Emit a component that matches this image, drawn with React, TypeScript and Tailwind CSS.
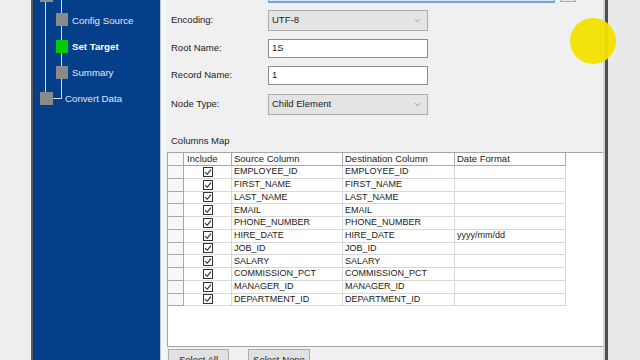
import React from 'react';
import { ChevronDown } from 'lucide-react';

interface RowData {
  source: string;
  dest: string;
  format?: string;
}

const rows: Array<RowData> = [
  { source: 'EMPLOYEE_ID', dest: 'EMPLOYEE_ID' },
  { source: 'FIRST_NAME', dest: 'FIRST_NAME' },
  { source: 'LAST_NAME', dest: 'LAST_NAME' },
  { source: 'EMAIL', dest: 'EMAIL' },
  { source: 'PHONE_NUMBER', dest: 'PHONE_NUMBER' },
  { source: 'HIRE_DATE', dest: 'HIRE_DATE', format: 'yyyy/mm/dd' },
  { source: 'JOB_ID', dest: 'JOB_ID' },
  { source: 'SALARY', dest: 'SALARY' },
  { source: 'COMMISSION_PCT', dest: 'COMMISSION_PCT' },
  { source: 'MANAGER_ID', dest: 'MANAGER_ID' },
  { source: 'DEPARTMENT_ID', dest: 'DEPARTMENT_ID' },
];

const CheckBox: React.FC = () => (
  <svg width="10" height="10" viewBox="0 0 10 10">
    <rect x="0.5" y="0.5" width="9" height="9" fill="#fff" stroke="#333" strokeWidth="1" />
    <path d="M2 5.2 L4.2 7.3 L8 2.6" fill="none" stroke="#222" strokeWidth="1.1" />
  </svg>
);

const Sidebar: React.FC = () => (
  <div className="relative w-[127px] h-full shrink-0 bg-[#053f89]">
    <svg className="absolute left-0 top-0" width="127" height="360" viewBox="0 0 127 360">
      <line x1="12.5" y1="0" x2="12.5" y2="92" stroke="#d5dcea" strokeWidth="1" />
      <line x1="28.5" y1="0" x2="28.5" y2="98.5" stroke="#d5dcea" strokeWidth="1" />
      <line x1="20" y1="98.5" x2="29" y2="98.5" stroke="#d5dcea" strokeWidth="1" />
      <rect x="7" y="-10" width="13" height="12" fill="#8c8c8c" />
      <rect x="23" y="13" width="12" height="13" fill="#8a8a8a" />
      <rect x="23" y="40" width="12" height="13" fill="#00cc00" />
      <rect x="23" y="66" width="12" height="13" fill="#8a8a8a" />
      <rect x="7" y="92" width="13" height="13" fill="#8a8a8a" />
    </svg>
    <div className="relative flex flex-col pt-[7px] pl-[39px] text-[9.7px] leading-[13px] text-[#e2e8f2]">
      <div className="h-[26px] flex items-center">Config Source</div>
      <div className="h-[26px] flex items-center font-bold text-white">Set Target</div>
      <div className="h-[26px] flex items-center">Summary</div>
      <div className="h-[26px] flex items-center -ml-[7px]">Convert Data</div>
    </div>
  </div>
);

const Field: React.FC<{ label: string; value: string; select?: boolean; className: string }> = (props) => {
  const { label, value, select, className } = props;
  return (
    <div className={`flex items-center shrink-0 ${className}`}>
      <div className="w-[97px] ml-[5px] text-[9.5px] text-[#1c1c1c]">{label}</div>
      {select ? (
        <div className="w-[160px] h-[21px] bg-[#e4e4e4] border border-[#adadad] flex items-center justify-between pl-[3px] pr-[5px] text-[9.5px] text-[#1a1a1a]">
          <span>{value}</span>
          <ChevronDown size={9} strokeWidth={1.5} color="#666" />
        </div>
      ) : (
        <div className="w-[160px] h-[19px] bg-white border border-[#8c8c8c] flex items-center pl-[3px] text-[9.5px] text-[#1a1a1a]">
          {value}
        </div>
      )}
    </div>
  );
};

const Grid: React.FC = () => (
  <div className="shrink-0 ml-[1px] mt-[5px] w-[437px] h-[195px] bg-white border border-[#a5a5a5] text-[9px] text-[#1a1a1a] leading-none">
    <div className="flex h-[13px]">
      <div className="w-[16px] border-r border-b border-[#a8a8a8] bg-[#f7f7f7]" />
      <div className="w-[48px] border-r border-b border-[#a8a8a8] flex items-center pl-[3px] text-[9.5px]">Include</div>
      <div className="w-[111px] border-r border-b border-[#a8a8a8] flex items-center pl-[2px] text-[9.5px]">Source Column</div>
      <div className="w-[112px] border-r border-b border-[#a8a8a8] flex items-center pl-[2px] text-[9.5px]">Destination Column</div>
      <div className="w-[111px] border-r border-b border-[#a8a8a8] flex items-center pl-[2px] text-[9.5px]">Date Format</div>
    </div>
    {rows.map((r) => (
      <div key={r.source} className="flex h-[12.75px]">
        <div className="w-[16px] border-r border-b border-[#a8a8a8] bg-[#f7f7f7]" />
        <div className="w-[48px] border-r border-b border-[#d8d8d8] flex items-center justify-center">
          <CheckBox />
        </div>
        <div className="w-[111px] border-r border-b border-[#d8d8d8] flex items-center pl-[2px]">{r.source}</div>
        <div className="w-[112px] border-r border-b border-[#d8d8d8] flex items-center pl-[2px]">{r.dest}</div>
        <div className="w-[111px] border-r border-b border-[#d8d8d8] flex items-center pl-[2px]">{r.format}</div>
      </div>
    ))}
  </div>
);

const Form: React.FC = () => (
  <div className="w-[437px] h-full shrink-0 flex flex-col bg-[#f0f0f0]">
    <div className="flex items-start h-[3px] shrink-0">
      <div className="ml-[102px] w-[287px] h-[3px] bg-[#dce9f7] border-b-2 border-x border-[#78a6da]" />
      <div className="ml-[5px] w-[16px] h-[2px] bg-[#e6e6e6] border-b border-x border-[#adadad]" />
    </div>
    <Field className="mt-[7px]" label="Encoding:" value="UTF-8" select />
    <Field className="mt-[8px]" label="Root Name:" value="1S" />
    <Field className="mt-[8px]" label="Record Name:" value="1" />
    <Field className="mt-[9px]" label="Node Type:" value="Child Element" select />
    <div className="shrink-0 mt-[19px] ml-[5px] h-[13px] leading-[13px] text-[9.5px] text-[#1c1c1c]">Columns Map</div>
    <Grid />
    <div className="shrink-0 flex mt-[2px] ml-[2px] gap-[19px] text-[9.5px] text-[#1a1a1a]">
      <div className="w-[61px] h-[20px] bg-[#e1e1e1] border border-[#adadad] flex justify-center pt-[3px]">Select All</div>
      <div className="w-[62px] h-[20px] bg-[#e1e1e1] border border-[#adadad] flex justify-center pt-[3px]">Select None</div>
    </div>
  </div>
);

export default function App() {
  return (
    <div className="relative w-[640px] h-[360px] overflow-hidden flex bg-[#f0f0f0] font-['Liberation_Sans',Arial,sans-serif]">
      <div className="w-[31px] h-full shrink-0 bg-[#eeeeee]" />
      <div className="w-[2px] h-full shrink-0 bg-[#5c5c5c]" />
      <Sidebar />
      <div className="w-[6px] h-full shrink-0 bg-[#f5f5f5] border-l border-[#c6c6c6]" />
      <Form />
      <div className="w-[2px] h-full shrink-0 bg-[#d2d2d2]" />
      <div className="w-[3px] h-full shrink-0 bg-[#4f4f4f]" />
      <div className="flex-1 h-full bg-[#e9e9e9]" />
      <div className="absolute left-[570px] top-[18px] w-[46px] h-[46px] rounded-full bg-[#f1e100]/95" />
    </div>
  );
}
